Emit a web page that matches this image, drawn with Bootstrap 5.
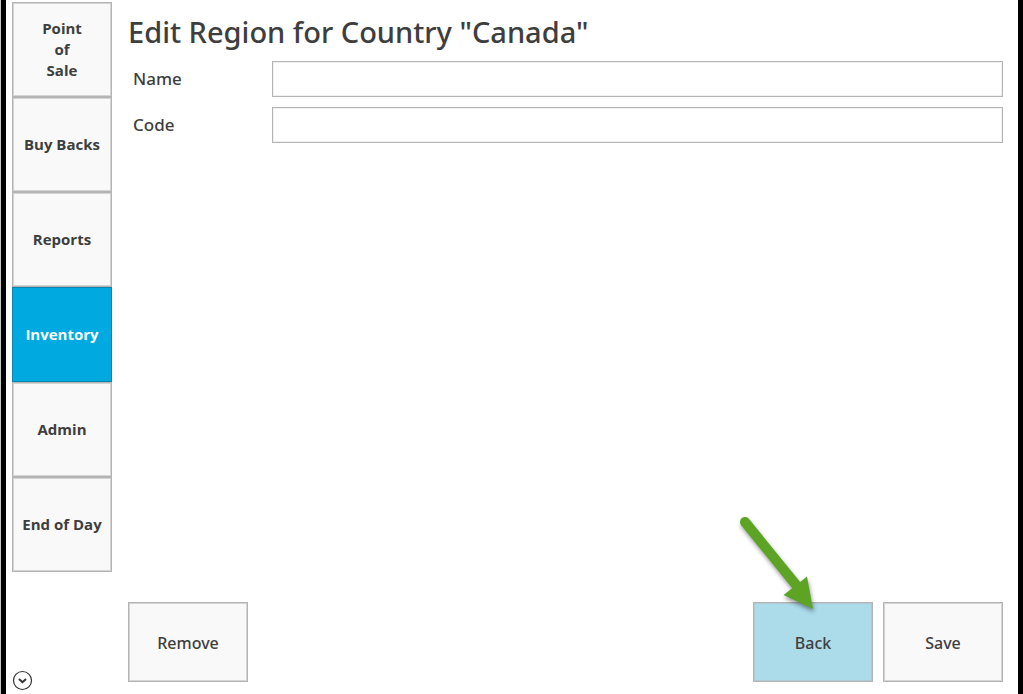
<!DOCTYPE html>
<html lang="en">
<head>
<meta charset="utf-8">
<meta name="viewport" content="width=device-width, initial-scale=1">
<title>Edit Region</title>
<link href="https://cdn.jsdelivr.net/npm/bootstrap@5.3.0/dist/css/bootstrap.min.css" rel="stylesheet">
<style>
  body { font-family: "Noto Sans", "Open Sans", sans-serif; color: #3e3e3e; background: #fff; }
  .frame { border-left: 1px solid #c8c8c8; }
  .frame-inner { border-left: 5px solid #000; border-right: 5px solid #000; padding: 2px 15px 0 6px; gap: 16px; }
  .side { width: 100px; flex: none; }
  .tile { border: 1px solid #b4b4b4; border-radius: 0; background: #f9f9f9; color: #3e3e3e; box-shadow: inset 0 0 0 1px #d4d4d4; }
  .tile:hover { background: #acdbea; color: #3e3e3e; border-color: #b4b4b4; }
  .side-tile { height: 95px; padding: 0 9px; font-family: "Open Sans", "Noto Sans", sans-serif; font-size: 15px; line-height: 21px; font-weight: 700; }
  .side-tile.current { background: #00aae0; border-color: #0a86b0; color: #fff; box-shadow: none; }
  .side-tile span { display: block; overflow: hidden; white-space: nowrap; }
  .action-tile { width: 120px; height: 80px; padding: 2px 0 0; font-size: 16px; font-weight: 500; }
  .tile-back { background: #acdbea; box-shadow: inset 0 0 0 1px #b0c8d0; }
  .page-title { font-size: 29px; line-height: 40px; font-weight: 500; padding-top: 10px; margin-bottom: 9px; }
  .field { margin-bottom: 10px; }
  .field-label { width: 144px; padding-left: 5px; font-size: 17px; font-weight: 500; flex: none; }
  .field-box { height: 36px; border: 1px solid #b4b4b4; border-radius: 0; font-size: 17px; padding: 0 8px; box-shadow: inset 0 0 0 1px #f0f0f0; }
  .actions { gap: 10px; padding-bottom: 12px; }
  .more { width: 21px; height: 21px; margin-bottom: 3px; line-height: 0; }
  .pointer { position: absolute; right: 60px; bottom: 73px; pointer-events: none; filter: drop-shadow(1px 3px 2px rgba(0,0,0,.4)); }
</style>
</head>
<body>
<div class="frame">
  <div class="frame-inner d-flex min-vh-100">
    <nav class="side d-flex flex-column" aria-label="Main">
      <button type="button" class="btn tile side-tile"><span>Point<br>of<br>Sale</span></button>
      <button type="button" class="btn tile side-tile"><span>Buy Backs</span></button>
      <button type="button" class="btn tile side-tile"><span>Reports</span></button>
      <button type="button" class="btn tile side-tile current" aria-current="page"><span>Inventory</span></button>
      <button type="button" class="btn tile side-tile"><span>Admin</span></button>
      <button type="button" class="btn tile side-tile"><span>End of Day</span></button>
      <button type="button" class="btn more p-0 border-0 mt-auto" aria-label="More">
        <svg width="21" height="21" viewBox="0 0 21 21" fill="none" stroke="#333"><circle cx="10.5" cy="10.5" r="9" stroke-width="1.2"/><path d="M7 9l3.500 3.200L14 9" stroke-width="2"/></svg>
      </button>
    </nav>
    <main class="flex-grow-1 d-flex flex-column">
      <h1 class="page-title">Edit Region for Country "Canada"</h1>
      <form class="d-flex flex-column flex-grow-1">
        <div class="field d-flex align-items-center">
          <label class="field-label" for="name">Name</label>
          <input class="form-control field-box" id="name" type="text">
        </div>
        <div class="field d-flex align-items-center">
          <label class="field-label" for="code">Code</label>
          <input class="form-control field-box" id="code" type="text">
        </div>
        <div class="actions d-flex mt-auto">
          <button type="button" class="btn tile action-tile me-auto">Remove</button>
          <div class="position-relative">
            <button type="button" class="btn tile action-tile tile-back">Back</button>
            <svg class="pointer" width="80" height="100" viewBox="0 0 80 100" fill="#5ea424" aria-hidden="true"><path d="M12 13L68 82" stroke="#5ea424" stroke-width="10" stroke-linecap="round"/><path d="M74 67.500L80 100L50.500 86Z"/></svg>
          </div>
          <button type="submit" class="btn tile action-tile">Save</button>
        </div>
      </form>
    </main>
  </div>
</div>
<script src="https://cdn.jsdelivr.net/npm/bootstrap@5.3.0/dist/js/bootstrap.bundle.min.js"></script>
</body>
</html>
